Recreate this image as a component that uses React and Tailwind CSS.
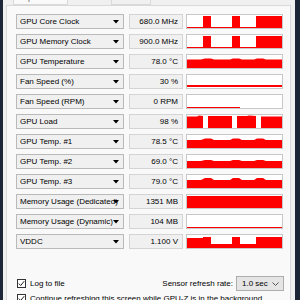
import React from 'react';

const RED = '#ff0000';

// each graph: inner area 95x13, drawn in local pixel coords
const spikes = (top) => (
  <>
    <rect x="16" y={top} width="8" height={13 - top} fill={RED} />
    <rect x="45" y={top} width="8" height={13 - top} fill={RED} />
    <rect x="69" y={top} width="26" height={13 - top} fill={RED} />
  </>
);

const tempFill = (base, bump) => (
  <path
    d={`M0 ${base} L14 ${base} L18 ${bump} L24 ${bump} L27 ${base} L43 ${base} L46 ${bump} L52 ${bump} L55 ${base} L67 ${base} L70 ${bump} L76 ${bump} L79 ${base} L95 ${base} L95 13 L0 13 Z`}
    fill={RED}
  />
);

const SENSORS = [
  {
    label: 'GPU Core Clock',
    value: '680.0 MHz',
    graph: (
      <>
        <rect x="0" y="12" width="95" height="1" fill={RED} />
        {spikes(1)}
      </>
    ),
  },
  {
    label: 'GPU Memory Clock',
    value: '900.0 MHz',
    graph: (
      <>
        <rect x="0" y="12" width="95" height="1" fill={RED} />
        {spikes(1)}
      </>
    ),
  },
  { label: 'GPU Temperature', value: '78.0 °C', graph: tempFill(4.5, 3.5) },
  { label: 'Fan Speed (%)', value: '30 %', graph: <rect x="0" y="10" width="95" height="2" fill={RED} /> },
  { label: 'Fan Speed (RPM)', value: '0 RPM', graph: <rect x="0" y="12" width="53" height="1" fill={RED} /> },
  {
    label: 'GPU Load',
    value: '98 %',
    graph: (
      <>
        <path d="M0 1.5 L10 1.5 L12 0.5 L16 1 L16 13 L0 13 Z" fill={RED} />
        <path d="M21 1 L45 1 L45 13 L21 13 Z" fill={RED} />
        <path d="M50 1 L60 1 L62 0.5 L69 1 L69 13 L50 13 Z" fill={RED} />
        <path d="M74 1.5 L95 1.5 L95 13 L74 13 Z" fill={RED} />
      </>
    ),
  },
  { label: 'GPU Temp. #1', value: '78.5 °C', graph: tempFill(5, 3.5) },
  { label: 'GPU Temp. #2', value: '69.0 °C', graph: tempFill(6, 5) },
  { label: 'GPU Temp. #3', value: '79.0 °C', graph: tempFill(5, 3) },
  { label: 'Memory Usage (Dedicated)', value: '1351 MB', graph: <rect x="0" y="1" width="95" height="12" fill={RED} /> },
  { label: 'Memory Usage (Dynamic)', value: '104 MB', graph: <rect x="0" y="12" width="95" height="1" fill={RED} /> },
  {
    label: 'VDDC',
    value: '1.100 V',
    graph: (
      <>
        <rect x="0" y="9" width="95" height="4" fill={RED} />
        <rect x="0" y="3" width="16" height="10" fill={RED} />
        {spikes(2)}
      </>
    ),
  },
];

function Arrow() {
  return (
    <svg width="6" height="4" viewBox="0 0 6 4" className="shrink-0">
      <path d="M0 0 L6 0 L3 3.5 Z" fill="#000" />
    </svg>
  );
}

function Check({ checked }) {
  return (
    <div className="w-[9px] h-[9px] border border-[#333] bg-white flex items-center justify-center shrink-0">
      {checked && (
        <svg width="7" height="7" viewBox="0 0 7 7">
          <path d="M0.8 3.6 L2.7 5.5 L6.2 1.2" stroke="#222" strokeWidth="1" fill="none" />
        </svg>
      )}
    </div>
  );
}

export default function App() {
  return (
    <div className="w-[300px] h-[300px] overflow-hidden bg-[#1c2636] flex font-['Liberation_Sans',Arial,sans-serif] text-[8px] text-black leading-none">
      <div className="ml-[3px] w-[292px] h-full bg-[#f0f0f0] flex flex-col">
        {/* tabs, mostly scrolled off the top */}
        <div className="h-[5px] flex items-end overflow-hidden pl-[10px] gap-[43px] shrink-0">
          <div className="w-[55px] h-[14px] border border-[#d9d9d9] bg-[#f9f9f9] flex items-start justify-center pt-[2px] text-[#555]">Graphics Card</div>
          <div className="w-[40px] h-[14px] border border-[#d9d9d9] bg-[#f0f0f0] flex items-start justify-center pt-[2px] text-[#555]">Validation</div>
        </div>

        {/* tab page */}
        <div className="ml-[3px] w-[285px] flex-1 border border-[#d9d9d9] bg-[#f9f9f9] pl-[9px] pt-[8px]">
          <div className="flex flex-col gap-[5px]">
            {SENSORS.map((s) => (
              <div key={s.label} className="flex h-[15px]">
                <div className="relative w-[108px] h-full border border-[#b9b9b9] bg-[#f0f0f0] flex items-center pl-[3px]">
                  <span className="whitespace-nowrap">{s.label}</span>
                  <div className="absolute right-[4px] top-[5px]">
                    <Arrow />
                  </div>
                </div>
                <div className="ml-[5px] w-[54px] h-full border border-[#d4d4d4] bg-[#f0f0f0] flex items-center justify-end pr-[4px] whitespace-nowrap">
                  {s.value}
                </div>
                <div className="ml-[3px] w-[97px] h-full border border-[#c8c8c8] bg-white">
                  <svg width="95" height="13" viewBox="0 0 95 13" className="block">
                    {s.graph}
                  </svg>
                </div>
              </div>
            ))}
          </div>

          <div className="mt-[27px] flex items-center pl-[1px] pr-[6px]">
            <div className="flex items-center gap-[4px]">
              <Check checked />
              <span>Log to file</span>
            </div>
            <div className="ml-auto flex items-center gap-[3px]">
              <span>Sensor refresh rate:</span>
              <div className="w-[48px] h-[15px] border border-[#adadad] bg-[#e5e5e5] flex items-center pl-[5px] pr-[4px]">
                <span className="flex-1">1.0 sec</span>
                <svg width="7" height="4" viewBox="0 0 7 4">
                  <path d="M0.5 0.5 L3.5 3.5 L6.5 0.5" stroke="#555" fill="none" />
                </svg>
              </div>
            </div>
          </div>
          <div className="mt-[3px] flex items-center gap-[4px] pl-[1px]">
            <Check checked />
            <span className="whitespace-nowrap">Continue refreshing this screen while GPU-Z is in the background</span>
          </div>
        </div>
      </div>
    </div>
  );
}
